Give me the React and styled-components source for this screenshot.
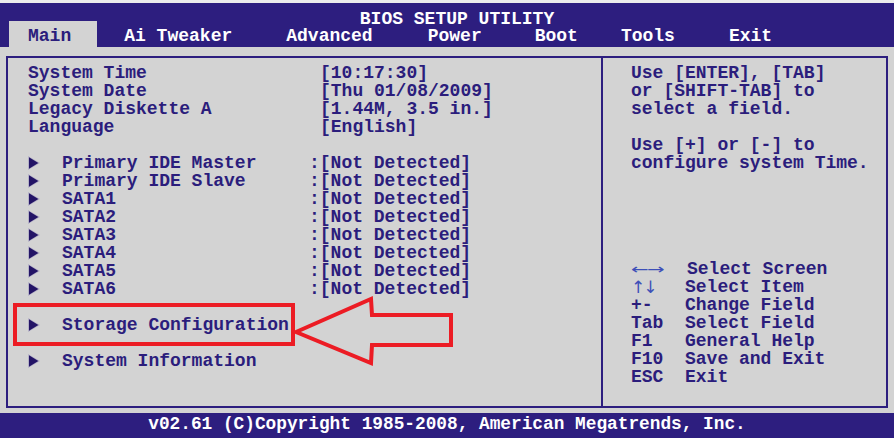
import React from "react";
import styled, { createGlobalStyle } from "styled-components";

const BLUE = "#2d1e7f";
const INK = "#2b1d7c";
const GRAY = "#d3d3d3";

const GlobalStyle = createGlobalStyle`
  html, body {
    margin: 0;
    padding: 0;
    background: ${GRAY};
  }
  body {
    font-family: "Liberation Mono", "Courier New", monospace;
    font-weight: bold;
    font-size: 18px;
  }
`;

const Screen = styled.div`
  width: 894px;
  height: 438px;
  display: flex;
  flex-direction: column;
  overflow: hidden;
  position: relative;
  background: ${GRAY};
`;

const Header = styled.header`
  border-top: 3px solid #ececec;
  background: ${BLUE};
  height: 44px;
  display: flex;
  flex-direction: column;
`;

const Title = styled.div`
  color: #ffffff;
  line-height: 12px;
  height: 12px;
  margin-top: 10px;
  padding-left: 20px;
  text-align: center;
  white-space: pre;
`;

const TabRow = styled.nav`
  display: flex;
  margin-top: -4px;
  padding-left: 9px;
  height: 26px;
`;

const Tab = styled.div`
  padding: 6px ${(p) => p.$right}px 2px ${(p) => p.$left}px;
  line-height: 18px;
  white-space: pre;
  color: ${(p) => (p.$active ? INK : "#ffffff")};
  background: ${(p) => (p.$active ? GRAY : "transparent")};
`;

const Body = styled.main`
  flex: 1;
  padding: 9px 6px 5px 6px;
  display: flex;
`;

const Frame = styled.div`
  flex: 1;
  border: 2px solid ${BLUE};
  display: grid;
  grid-template-columns: 593px 1fr;
`;

const LeftPanel = styled.section`
  padding: 6px 0 0 20px;
  display: flex;
  flex-direction: column;
`;

const Row = styled.div`
  display: grid;
  grid-template-columns: 292px 1fr;
  height: 18px;
  line-height: 18px;
  color: ${INK};
  white-space: pre;
`;

const Label = styled.div`
  display: flex;
  align-items: center;
`;

const PointerIcon = styled.svg`
  flex-shrink: 0;
  display: block;
`;

const SubText = styled.span`
  margin-left: 22px;
`;

const Value = styled.div`
  margin-left: ${(p) => (p.$colon ? -11 : 0)}px;
`;

const Spacer = styled.div`
  height: 18px;
`;

const RightPanel = styled.aside`
  border-left: 2px solid ${BLUE};
  padding: 6px 0 20px 28px;
  display: flex;
  flex-direction: column;
  justify-content: space-between;
  color: ${INK};
`;

const Help = styled.div`
  line-height: 18px;
  white-space: pre;
`;

const KeyList = styled.div`
  display: flex;
  flex-direction: column;
`;

const KeyRow = styled.div`
  display: grid;
  grid-template-columns: 54px 1fr;
  height: 18px;
  line-height: 18px;
  white-space: pre;
`;

const KeyText = styled.span`
  margin-left: ${(p) => p.$shift || 0}px;
`;

const ArrowKey = styled.span`
  font-family: "DejaVu Sans", sans-serif;
  font-weight: normal;
  font-size: ${(p) => p.$size}px;
  color: #3d4fb8;
  letter-spacing: ${(p) => p.$spacing}px;
  transform: scaleX(${(p) => p.$stretch || 1});
  transform-origin: left center;
  display: inline-block;
`;

const Footer = styled.footer`
  height: 25px;
  background: ${BLUE};
  color: #ffffff;
  font-size: 17.8px;
  line-height: 22px;
  text-align: center;
  white-space: pre;
`;

const Callout = styled.svg`
  position: absolute;
  left: 0;
  top: 0;
  pointer-events: none;
`;

function Pointer() {
  return (
    <PointerIcon width="12" height="14" viewBox="0 0 12 14">
      <path d="M0 0 L12 7 L0 14 Z" fill="#b4b0c6" />
      <path d="M1 1.2 L10.4 7 L1 12.8 Z" fill="#231466" />
    </PointerIcon>
  );
}

const tabs = [
  { name: "Main", left: 19, right: 26, active: true },
  { name: "Ai Tweaker", left: 27, right: 27 },
  { name: "Advanced", left: 27, right: 27 },
  { name: "Power", left: 28, right: 27 },
  { name: "Boot", left: 26, right: 22 },
  { name: "Tools", left: 21, right: 27 },
  { name: "Exit", left: 27, right: 27 },
];

const settings = [
  ["System Time", "[10:17:30]"],
  ["System Date", "[Thu 01/08/2009]"],
  ["Legacy Diskette A", "[1.44M, 3.5 in.]"],
  ["Language", "[English]"],
];

const drives = [
  "Primary IDE Master",
  "Primary IDE Slave",
  "SATA1",
  "SATA2",
  "SATA3",
  "SATA4",
  "SATA5",
  "SATA6",
];

const keys = [
  ["+-", "Change Field"],
  ["Tab", "Select Field"],
  ["F1", "General Help"],
  ["F10", "Save and Exit"],
  ["ESC", "Exit"],
];

function SubRow({ label, value }) {
  return (
    <Row>
      <Label>
        <Pointer />
        <SubText>{label}</SubText>
      </Label>
      {value && <Value $colon>:{value}</Value>}
    </Row>
  );
}

export default function App() {
  return (
    <>
      <GlobalStyle />
      <Screen>
        <Header>
          <Title>BIOS SETUP UTILITY</Title>
          <TabRow>
            {tabs.map((t) => (
              <Tab key={t.name} $left={t.left} $right={t.right} $active={t.active}>
                {t.name}
              </Tab>
            ))}
          </TabRow>
        </Header>

        <Body>
          <Frame>
            <LeftPanel>
              {settings.map(([label, value]) => (
                <Row key={label}>
                  <Label>{label}</Label>
                  <Value>{value}</Value>
                </Row>
              ))}
              <Spacer />
              {drives.map((d) => (
                <SubRow key={d} label={d} value="[Not Detected]" />
              ))}
              <Spacer />
              <SubRow label="Storage Configuration" />
              <Spacer />
              <SubRow label="System Information" />
            </LeftPanel>

            <RightPanel>
              <Help>
                {"Use [ENTER], [TAB]\nor [SHIFT-TAB] to\nselect a field.\n\nUse [+] or [-] to\nconfigure system Time."}
              </Help>
              <KeyList>
                <KeyRow>
                  <ArrowKey $size={14} $spacing={-1} $stretch={1.5}>←→</ArrowKey>
                  <KeyText $shift={2}>Select Screen</KeyText>
                </KeyRow>
                <KeyRow>
                  <ArrowKey $size={17} $spacing={-2}>↑↓</ArrowKey>
                  <KeyText>Select Item</KeyText>
                </KeyRow>
                {keys.map(([k, d]) => (
                  <KeyRow key={k}>
                    <span>{k}</span>
                    <KeyText>{d}</KeyText>
                  </KeyRow>
                ))}
              </KeyList>
            </RightPanel>
          </Frame>
        </Body>

        <Footer>v02.61 (C)Copyright 1985-2008, American Megatrends, Inc.</Footer>

        <Callout width="894" height="438" viewBox="0 0 894 438">
          <rect x="15" y="305" width="278" height="39" fill="none" stroke="#ec1c24" strokeWidth="4" />
          <path
            d="M296 332 L371 299 L372 315 L451 315 L451 345 L372 345 L371 363 Z"
            fill="none"
            stroke="#ec1c24"
            strokeWidth="4"
            strokeLinejoin="miter"
          />
        </Callout>
      </Screen>
    </>
  );
}
